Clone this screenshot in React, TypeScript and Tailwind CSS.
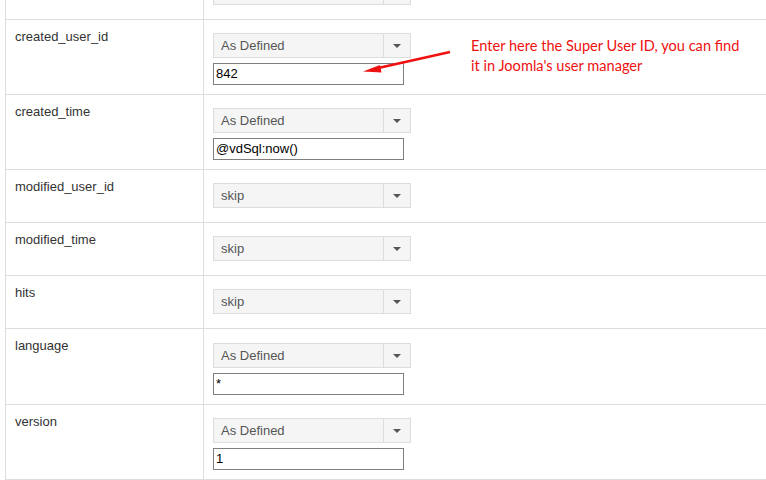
import React from 'react';

type Row = {
  label: string;
  value: string;
  input?: string;
  extra?: boolean;
};

// first row is scrolled mostly out of view; only the bottom of its select shows
const rows: Row[] = [
  { label: '', value: '' },
  { label: 'created_user_id', value: 'As Defined', input: '842' },
  { label: 'created_time', value: 'As Defined', input: '@vdSql:now()' },
  { label: 'modified_user_id', value: 'skip' },
  { label: 'modified_time', value: 'skip' },
  { label: 'hits', value: 'skip' },
  { label: 'language', value: 'As Defined', input: '*', extra: true },
  { label: 'version', value: 'As Defined', input: '1' },
];

function Select({ value }: { value: string }) {
  return (
    <div className="flex h-[25px] w-[198px] border border-[#dddddd] bg-[#f5f5f5]">
      <div className="flex flex-1 items-center px-[7px] text-[#555555]">{value}</div>
      <div className="flex w-[27px] items-center justify-center border-l border-[#dddddd]">
        <svg width="8" height="4" viewBox="0 0 8 4">
          <path d="M0 0 L8 0 L4 4 Z" fill="#555555" />
        </svg>
      </div>
    </div>
  );
}

function TextInput({ value }: { value: string }) {
  return (
    <div className="mt-[5px] flex h-[22px] w-[191px] items-center border border-[#7f7f7f] bg-white pl-[2px] text-black">
      {value}
    </div>
  );
}

export default function App() {
  return (
    <div className="relative h-[480px] w-[766px] overflow-hidden bg-white font-['Liberation_Sans',Arial,sans-serif] text-[13px] leading-[18px]">
      <div className="-mt-[33px] ml-[5px] border-l border-[#dddddd]">
        {rows.map((r, i) => (
          <div key={i} className="flex border-b border-[#dddddd]">
            <div className="w-[198px] shrink-0 border-r border-[#dddddd] pl-[9px] pt-[8px] text-[#333333]">
              {r.label}
            </div>
            <div
              className={`pl-[9px] ${r.extra ? 'pt-[14px]' : 'pt-[13px]'} ${r.input ? 'pb-[9px]' : 'pb-[14px]'}`}
            >
              <Select value={r.value} />
              {r.input !== undefined && <TextInput value={r.input} />}
            </div>
          </div>
        ))}
      </div>

      <svg className="absolute left-0 top-0" width="766" height="480" viewBox="0 0 766 480">
        <line x1="450" y1="52" x2="376" y2="68.5" stroke="#ee1111" strokeWidth="2.5" />
        <path d="M363 71.5 L380 65 L381.5 72.5 Z" fill="#ee1111" />
      </svg>

      <div className="absolute left-[471px] top-[36px] font-['Lato',sans-serif] text-[14.6px] leading-[20px] text-[#ee1111]">
        <div>Enter here the Super User ID, you can find</div>
        <div>it in Joomla's user manager</div>
      </div>
    </div>
  );
}
